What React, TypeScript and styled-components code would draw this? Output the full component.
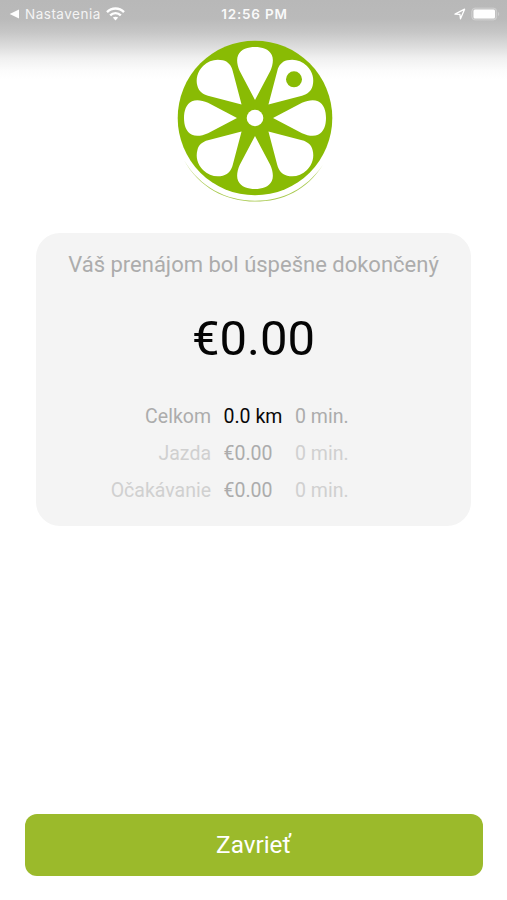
import React from 'react';
import styled, { createGlobalStyle } from 'styled-components';

const GlobalStyle = createGlobalStyle`
  *, *::before, *::after { box-sizing: border-box; }
  body { margin: 0; background: #fff; }
`;

const Screen = styled.div`
  width: 507px;
  height: 900px;
  display: flex;
  flex-direction: column;
  align-items: center;
  overflow: hidden;
  font-family: Roboto, sans-serif;
  background: linear-gradient(
    to bottom,
    #b8b8b8 0px,
    #bababa 19px,
    #c6c6c6 32px,
    #dadada 45px,
    #f0f0f0 58px,
    #fbfbfb 70px,
    #fff 79px
  ) #fff;
`;

const StatusBar = styled.header`
  width: 100%;
  height: 28px;
  flex: none;
  display: grid;
  grid-template-columns: 1fr auto 1fr;
  align-items: center;
  padding: 0 7px 0 9px;
  color: #fff;
  font-family: Inter, sans-serif;
  font-size: 13px;
  line-height: 16px;
`;

const BackGroup = styled.div`
  display: flex;
  align-items: center;
`;

const BackLabel = styled.span`
  margin: 0 5px 0 5px;
  font-size: 13.5px;
  letter-spacing: 0.5px;
  opacity: 0.85;
`;

const Clock = styled.time`
  font-size: 13.5px;
  font-weight: 600;
  letter-spacing: 0.8px;
  opacity: 0.92;
`;

const Indicators = styled.div`
  display: flex;
  align-items: center;
  justify-content: flex-end;
  gap: 5px;
`;

const Logo = styled.svg`
  display: block;
  flex: none;
  width: 160px;
  height: 166px;
  margin: 10px 0 0 3px;
`;

const Summary = styled.main`
  width: 435px;
  height: 293px;
  flex: none;
  margin-top: 29px;
  padding-top: 18px;
  border-radius: 24px;
  background: #f4f4f4;
  display: flex;
  flex-direction: column;
  align-items: center;
`;

const Title = styled.h1`
  margin: 0;
  font-size: 22px;
  font-weight: 400;
  line-height: 28px;
  color: #acacac;
  white-space: nowrap;
`;

const Total = styled.div`
  margin-top: 30px;
  font-size: 49px;
  line-height: 60px;
  color: #050505;
`;

const Details = styled.div`
  width: 100%;
  margin-top: 29px;
  display: grid;
  grid-template-columns: 175px 59px 1fr;
  grid-auto-rows: 37px;
  column-gap: 12.5px;
  align-items: center;
  font-size: 19.5px;
  white-space: nowrap;
`;

const tones = { strong: '#080808', medium: '#acacac', light: '#d0d0d0' };

const Cell = styled.span<{ $tone: keyof typeof tones; $end?: boolean }>`
  color: ${({ $tone }) => tones[$tone]};
  text-align: ${({ $end }) => ($end ? 'right' : 'left')};
`;

const CloseButton = styled.button`
  width: 458px;
  height: 62px;
  flex: none;
  margin: auto 0 24px;
  padding: 0;
  border: 0;
  border-radius: 12px;
  background: #9bba2b;
  color: #fff;
  font: 400 24.3px/30px Roboto, sans-serif;
`;

type Tone = keyof typeof tones;
const rows: { label: string; value: string; time: string; tone: Tone; valueTone: Tone }[] = [
  { label: 'Celkom', value: '0.0 km', time: '0 min.', tone: 'medium', valueTone: 'strong' },
  { label: 'Jazda', value: '€0.00', time: '0 min.', tone: 'light', valueTone: 'medium' },
  { label: 'Očakávanie', value: '€0.00', time: '0 min.', tone: 'light', valueTone: 'medium' },
];

const straightPetal =
  'M0-18 L-15.3-47 C-18-53-18.7-59-16.8-63 C-14-69-7-71 0-71 C7-71 14-69 16.8-63 C18.7-59 18-53 15.3-47Z';
const diagonalPetal =
  'M0-19 L-17.5-49 C-20.5-54-20.8-59-18-63.5 C-14.5-69.5-8-73.5 0-73.5 C8-73.5 14.5-69.5 18-63.5 C20.8-59 20.5-54 17.5-49Z';

const LimeLogo = () => (
  <Logo viewBox="-80 -80 160 166" aria-label="Lime slice">
    <circle r="77.3" fill="#89bb04" />
    <g fill="#fff">
      {[0, 90, 180, 270].map((angle) => (
        <React.Fragment key={angle}>
          <path transform={`rotate(${angle})`} d={straightPetal} />
          <path transform={`rotate(${angle + 45})`} d={diagonalPetal} />
        </React.Fragment>
      ))}
      <circle r="8.3" />
    </g>
    <circle cx="39" cy="-38.7" r="8" fill="#89bb04" />
    <path d="M-71 42.3 C-55 69-29 82.7 0 82.7 C28 82.7 51 71 68 46.7 C52 72 28 83.6 0 83.6 C-30 83.6-56 69-71 42.3Z" fill="#a9ca50" />
  </Logo>
);

export default function App() {
  return (
    <>
      <GlobalStyle />
      <Screen>
        <StatusBar>
          <BackGroup>
            <svg width="11" height="10" viewBox="0 0 11 10">
              <path d="M.7 5 10 .5v9Z" fill="#fff" />
            </svg>
            <BackLabel>Nastavenia</BackLabel>
            <svg width="19" height="14" viewBox="0 0 19 14" fill="none" stroke="#fff" strokeWidth="2.4">
              <path d="M1 5.1C5.8.2 13.2.2 18 5.1M4.2 8.4c3-3 7.6-3 10.6 0" />
              <path d="M6.8 10.6c1.6-1.3 3.8-1.3 5.4 0L9.5 13.4Z" fill="#fff" stroke="none" />
            </svg>
          </BackGroup>
          <Clock>12:56 PM</Clock>
          <Indicators>
            <svg width="12" height="12" viewBox="0 0 12 12" fill="none" stroke="#fff" strokeWidth="1.3" strokeLinejoin="round">
              <path d="M1 6.2 10.6 1.2 6.5 10.8 5.9 6.4Z" />
            </svg>
            <svg width="29" height="14" viewBox="0 0 29 14">
              <rect x=".7" y="1" width="25" height="12" rx="3.5" fill="#fff" fillOpacity=".12" stroke="#fff" strokeOpacity=".25" />
              <rect x="2.5" y="2.5" width="21.5" height="9" rx="1.5" fill="#fff" />
              <path d="M27 5c1.7.8 1.7 3.2 0 4Z" fill="#fff" opacity=".3" />
            </svg>
          </Indicators>
        </StatusBar>
        <LimeLogo />
        <Summary>
          <Title>Váš prenájom bol úspešne dokončený</Title>
          <Total>€0.00</Total>
          <Details>
            {rows.map((row) => (
              <React.Fragment key={row.label}>
                <Cell $tone={row.tone} $end>{row.label}</Cell>
                <Cell $tone={row.valueTone}>{row.value}</Cell>
                <Cell $tone={row.tone}>{row.time}</Cell>
              </React.Fragment>
            ))}
          </Details>
        </Summary>
        <CloseButton type="button">Zavrieť</CloseButton>
      </Screen>
    </>
  );
}
